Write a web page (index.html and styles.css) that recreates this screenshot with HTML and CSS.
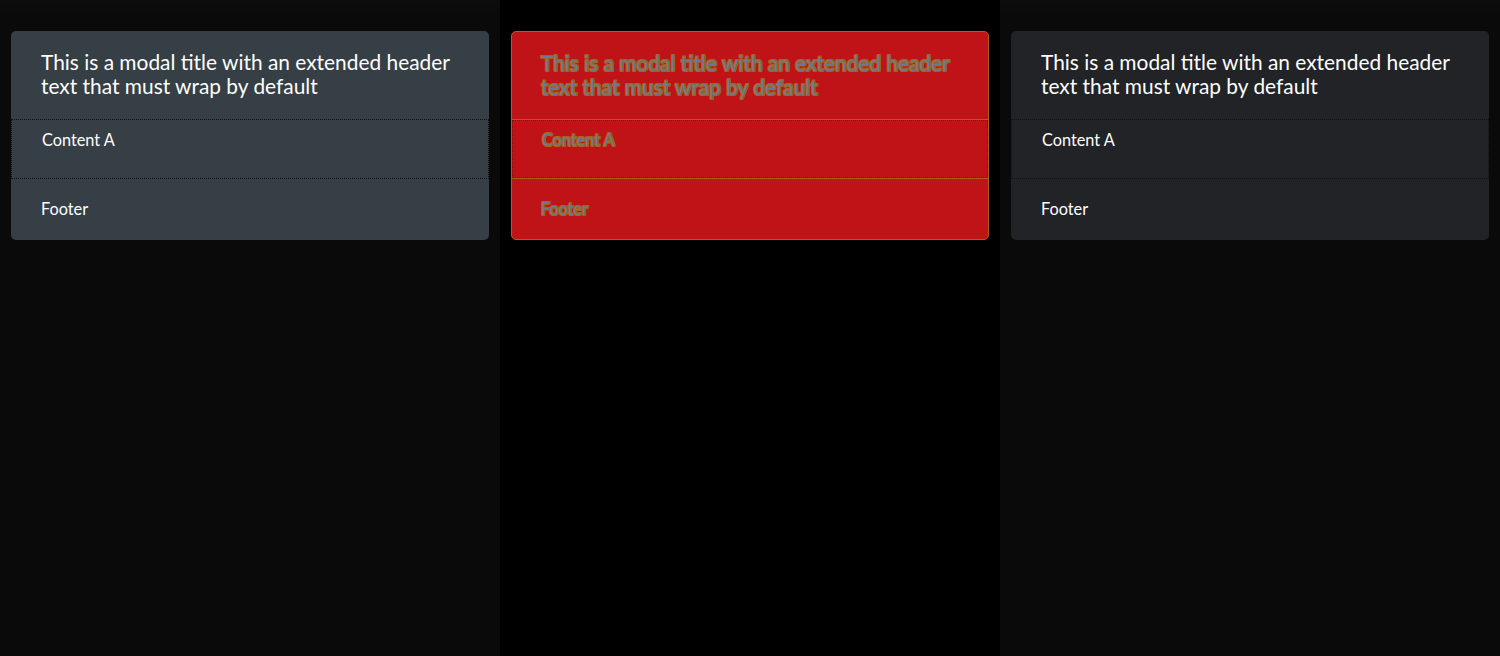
FILE: index.html
```html
<!DOCTYPE html>
<html lang="en">
<head>
<meta charset="utf-8">
<title>Modals</title>
<link rel="stylesheet" href="styles.css">
</head>
<body>
<div class="cols">
  <div class="col col-side">
    <div class="modal modal-gray">
      <div class="m-header"><h5 class="m-title">This is a modal title with an extended header text that must wrap by default</h5></div>
      <div class="m-body">Content A</div>
      <div class="m-footer">Footer</div>
    </div>
  </div>
  <div class="col col-mid">
    <div class="modal modal-hc">
      <div class="m-header"><h5 class="m-title">This is a modal title with an extended header text that must wrap by default</h5></div>
      <div class="m-body">Content A</div>
      <div class="m-footer">Footer</div>
    </div>
  </div>
  <div class="col col-side">
    <div class="modal modal-dark">
      <div class="m-header"><h5 class="m-title">This is a modal title with an extended header text that must wrap by default</h5></div>
      <div class="m-body">Content A</div>
      <div class="m-footer">Footer</div>
    </div>
  </div>
</div>
</body>
</html>
```
FILE: styles.css
```css
html, body {
  margin: 0;
  padding: 0;
  height: 100%;
  background: #000;
}
body {
  font-family: "Lato", "Open Sans", sans-serif;
}
.cols {
  display: grid;
  grid-template-columns: 500px 500px 500px;
  height: 656px;
}
.col {
  padding: 31px 11px 0 11px;
  box-sizing: border-box;
}
.col-side {
  background: linear-gradient(#0d0d0d 0, #0a0a0a 16px, #0a0a0a 100%);
}
.col-mid {
  background: #000;
}
.modal {
  border-radius: 5px;
  overflow: hidden;
  color: #fff;
}
.m-header {
  padding: 19px 30px 21px 30px;
  border-bottom: 1px dotted #111;
}
.m-title {
  margin: 0;
  font-size: 20.9px;
  line-height: 24px;
  font-weight: 400;
}
.m-body {
  padding: 10px 30px 28px 30px;
  font-size: 16.3px;
  line-height: 20px;
  border: 1px dotted #111;
  border-top: 0;
}
.m-footer {
  padding: 20px 30px 21px 30px;
  font-size: 16.3px;
  line-height: 20px;
}
.modal-gray {
  background: #363e46;
}
.modal-dark {
  background: #212327;
}
.modal-hc {
  background: #c01317;
  border: 1px solid #a8621c;
  color: #6a7a92;
  text-shadow: 1px 0 0 #a8621c, -1px 0 0 #a8621c, 0 1px 0 #a8621c, 0 -1px 0 #a8621c,
    1px 1px 0 #a8621c, -1px -1px 0 #a8621c, 1px -1px 0 #a8621c, -1px 1px 0 #a8621c;
}
.modal-hc .m-header {
  padding: 19px 29px 20px 29px;
  border-bottom: 1px solid #a8621c;
}
.modal-hc .m-body {
  padding: 9px 29px 27px 29px;
  border: 1px dotted #4a2a08;
}
.modal-hc .m-footer {
  padding: 20px 29px 20px 29px;
  border-top: 1px solid #a8621c;
}
```
